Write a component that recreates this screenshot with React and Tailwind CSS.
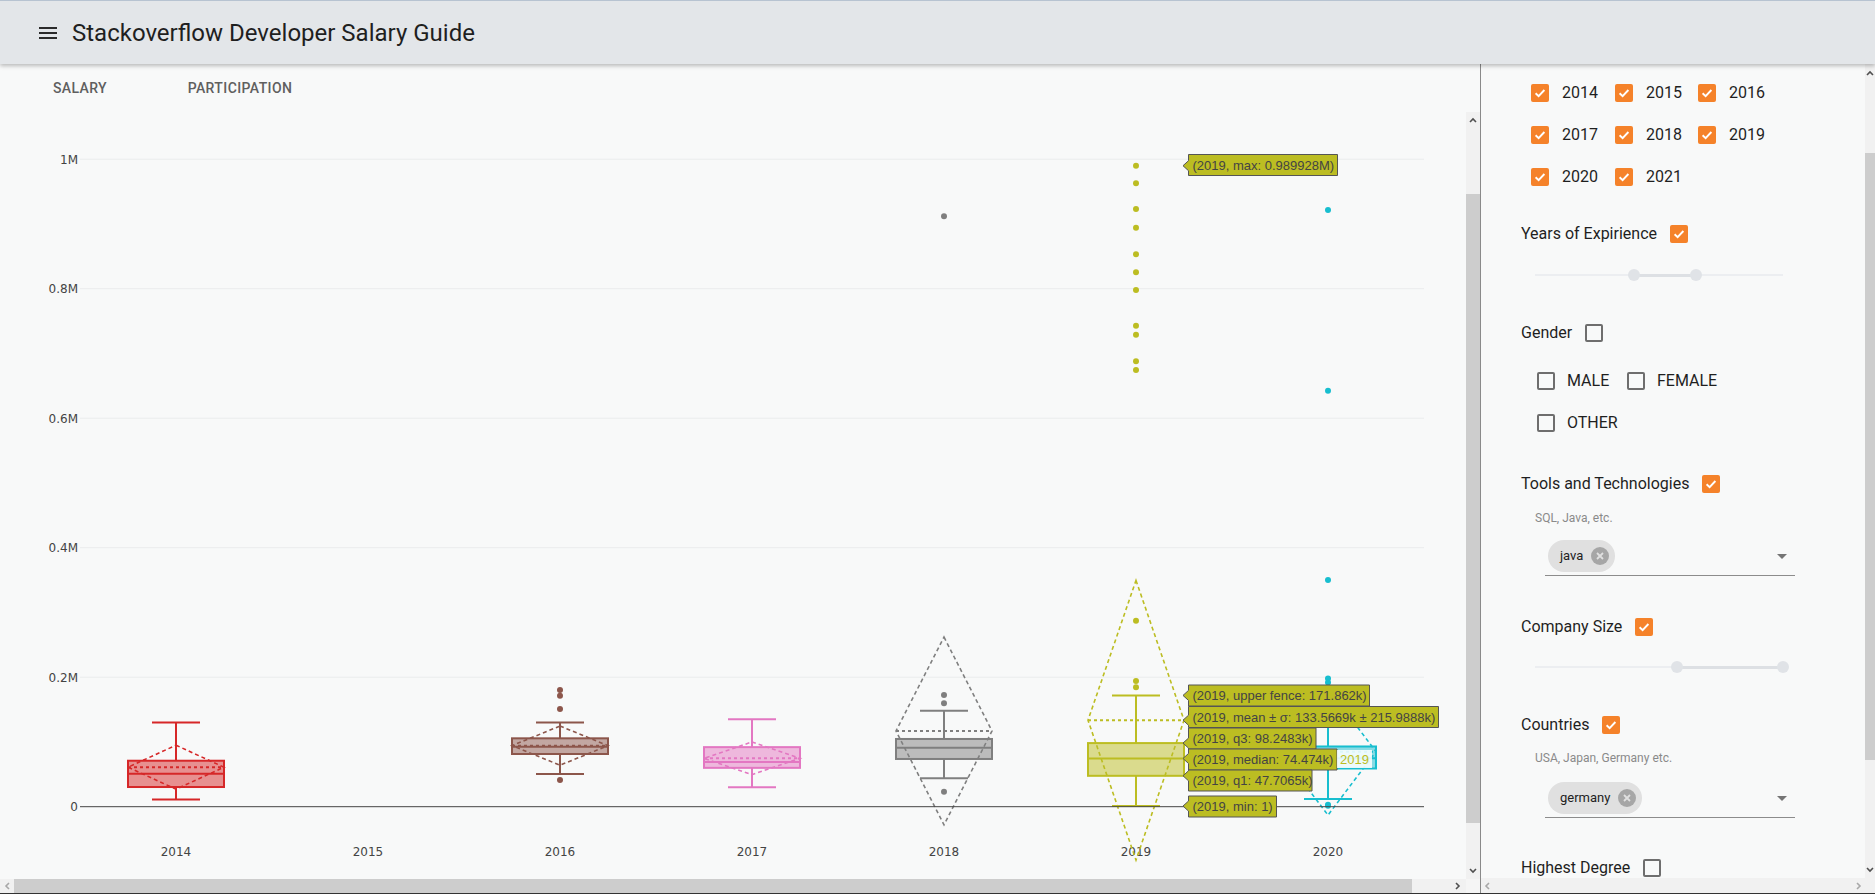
import React from 'react';

const Y = (v) => 806.7 - v * 0.6475;

const boxes = [
  { x: 176, c: '#d62728', lf: 11, q1: 30.4, med: 51, q3: 71, uf: 130, mean: 61, sd: 34, out: [] },
  { x: 560, c: '#8c564b', lf: 50.5, q1: 81.4, med: 92.7, q3: 105.6, uf: 130, mean: 94.3, sd: 30.3, out: [180.2, 171.4, 150.9, 41.2] },
  { x: 752, c: '#e377c2', lf: 30, q1: 60, med: 69, q3: 92, uf: 135, mean: 74.75, sd: 25.25, out: [] },
  { x: 944, c: '#7f7f7f', lf: 44, q1: 73.7, med: 91, q3: 104.6, uf: 148, mean: 117, sd: 145, out: [911.7, 172.5, 159.7, 23.2] },
  {
    x: 1136, c: '#bcbd22', lf: 1, q1: 47.7065, med: 74.474, q3: 98.2483, uf: 171.862, mean: 133.5669, sd: 215.9888,
    out: [989.9, 962.8, 923.1, 894.3, 853.2, 825.5, 798, 742.9, 729, 687.9, 674.4, 287.2, 194.1, 184.4],
  },
  { x: 1328, c: '#17becf', lf: 12, q1: 59, med: 75, q3: 93, uf: 180, mean: 85, sd: 98, out: [921.5, 642.5, 350, 198, 192, 3, 1.5] },
];

const tips = [
  { ay: Y(989.928), top: 154.5, w: 149, t: '(2019, max: 0.989928M)' },
  { ay: Y(171.862), top: 685, w: 181, t: '(2019, upper fence: 171.862k)' },
  { ay: Y(133.5669), top: 706.5, w: 250, t: '(2019, mean ± σ: 133.5669k ± 215.9888k)' },
  { ay: Y(98.2483), top: 728, w: 127.5, t: '(2019, q3: 98.2483k)' },
  { ay: Y(74.474), top: 749, w: 148.5, t: '(2019, median: 74.474k)' },
  { ay: Y(47.7065), top: 770, w: 123.5, t: '(2019, q1: 47.7065k)' },
  { ay: Y(1), top: 796, w: 88, t: '(2019, min: 1)' },
];

const years = ['2014', '2015', '2016', '2017', '2018', '2019', '2020'];

function BoxTrace({ b }) {
  const l = b.x - 48;
  const r = b.x + 48;
  return (
    <g>
      <polygon
        points={`${b.x},${Y(b.mean + b.sd)} ${r},${Y(b.mean)} ${b.x},${Y(b.mean - b.sd)} ${l},${Y(b.mean)}`}
        fill="none"
        stroke={b.c}
        strokeWidth="1.6"
        strokeDasharray="4,3"
      />
      <line x1={b.x} x2={b.x} y1={Y(b.q3)} y2={Y(b.uf)} stroke={b.c} strokeWidth="2" />
      <line x1={b.x} x2={b.x} y1={Y(b.q1)} y2={Y(b.lf)} stroke={b.c} strokeWidth="2" />
      <line x1={b.x - 24} x2={b.x + 24} y1={Y(b.uf)} y2={Y(b.uf)} stroke={b.c} strokeWidth="2" />
      <line x1={b.x - 24} x2={b.x + 24} y1={Y(b.lf)} y2={Y(b.lf)} stroke={b.c} strokeWidth="2" />
      <rect
        x={l}
        y={Y(b.q3)}
        width={96}
        height={Y(b.q1) - Y(b.q3)}
        fill={b.c}
        fillOpacity="0.5"
        stroke={b.c}
        strokeWidth="2"
      />
      <line x1={l} x2={r} y1={Y(b.med)} y2={Y(b.med)} stroke={b.c} strokeWidth="2" />
      <line x1={l} x2={r} y1={Y(b.mean)} y2={Y(b.mean)} stroke={b.c} strokeWidth="2" strokeDasharray="3,3" />
      {b.out.map((v, i) => (
        <circle key={i} cx={b.x} cy={Y(v)} r="3" fill={b.c} />
      ))}
    </g>
  );
}

function HoverLabel({ tip }) {
  const rx = 1188.5;
  const h = 21;
  const a1 = Math.max(tip.top, tip.ay - 5);
  const a2 = Math.min(tip.top + h, tip.ay + 5);
  return (
    <g>
      <path
        d={`M1183,${tip.ay} L${rx},${a1} V${tip.top} H${rx + tip.w} V${tip.top + h} H${rx} V${a2} Z`}
        fill="#bcbd22"
        stroke="#555"
        strokeWidth="1"
      />
      <text x={rx + 4} y={tip.top + h / 2 + 4.5} fontSize="13" fill="#444" fontFamily="'Liberation Sans', Arial, sans-serif">
        {tip.t}
      </text>
    </g>
  );
}

function SalaryChart() {
  const grid = [200, 400, 600, 800, 1000];
  const labels = { 200: '0.2M', 400: '0.4M', 600: '0.6M', 800: '0.8M', 1000: '1M' };
  return (
    <svg width="1466" height="767" viewBox="0 112 1466 767" className="block">
      {grid.map((v) => (
        <line key={v} x1="80" x2="1424" y1={Y(v)} y2={Y(v)} stroke="#eaeced" strokeWidth="1" />
      ))}
      <g fontFamily="'DejaVu Sans', Verdana, sans-serif" fontSize="12" fill="#444">
        {grid.map((v) => (
          <text key={v} x="78" y={Y(v)} dy="0.36em" textAnchor="end">
            {labels[v]}
          </text>
        ))}
        <text x="78" y={Y(0)} dy="0.36em" textAnchor="end">0</text>
        {years.map((yr, i) => (
          <text key={yr} x={176 + i * 192} y="856" textAnchor="middle">
            {yr}
          </text>
        ))}
      </g>
      {boxes.map((b) => (
        <BoxTrace key={b.x} b={b} />
      ))}
      <line x1="80" x2="1424" y1={Y(0)} y2={Y(0)} stroke="#444" strokeWidth="1" />
      {tips.map((t) => (
        <HoverLabel key={t.t} tip={t} />
      ))}
      <rect x="1337" y="750" width="35" height="18" fill="#ffffff" fillOpacity="0.85" />
      <text x="1354.5" y="763.5" textAnchor="middle" fontSize="13" fill="#bcbd22" fontFamily="'Liberation Sans', Arial, sans-serif">
        2019
      </text>
    </svg>
  );
}

function Chevron({ dir, light }) {
  const paths = {
    up: 'M1 5 L4 2 L7 5',
    down: 'M1 2 L4 5 L7 2',
    left: 'M5 1 L2 4 L5 7',
    right: 'M2 1 L5 4 L2 7',
  };
  const vert = dir === 'up' || dir === 'down';
  return (
    <svg width={vert ? 8 : 7} height={vert ? 7 : 8} viewBox={vert ? '0 0 8 7' : '0 0 7 8'}>
      <path d={paths[dir]} fill="none" stroke={light ? '#a8a8a8' : '#505050'} strokeWidth="1.6" />
    </svg>
  );
}

function Check({ on }) {
  if (!on) {
    return <span className="w-[18px] h-[18px] shrink-0 rounded-[2px] border-2 border-[#6e6e6e]" />;
  }
  return (
    <span className="w-[18px] h-[18px] shrink-0 rounded-[2px] bg-[#f5822a] flex items-center justify-center">
      <svg width="14" height="14" viewBox="0 0 14 14">
        <path d="M2.6 7.2 L5.6 10.1 L11.4 4" fill="none" stroke="#fff" strokeWidth="1.9" />
      </svg>
    </span>
  );
}

function SectionLabel({ text, on }) {
  return (
    <div className="ml-[40px] h-[24px] flex items-center gap-[13px] text-[16px] text-[#1f1f1f]">
      <span>{text}</span>
      <Check on={on} />
    </div>
  );
}

function RangeSlider({ a, b, mt }) {
  return (
    <div className={`ml-[54px] w-[248px] h-[12px] relative ${mt}`}>
      <div className="absolute left-0 right-0 top-[5px] h-[2px] bg-[#eceef1]" />
      <div className="absolute top-[4.5px] h-[3px] bg-[#dde0e4]" style={{ left: a, width: b - a }} />
      <div className="absolute top-0 w-[12px] h-[12px] rounded-full bg-[#e0e3e7]" style={{ left: a - 6 }} />
      <div className="absolute top-0 w-[12px] h-[12px] rounded-full bg-[#e0e3e7]" style={{ left: b - 6 }} />
    </div>
  );
}

function ChipSelect({ value, mt }) {
  return (
    <div className={`ml-[64px] w-[250px] flex items-center justify-between border-b border-[#8c8c8c] pb-[3px] ${mt}`}>
      <div className="ml-[3px] h-[32px] rounded-full bg-[#e0e0e0] pl-[12px] pr-[6px] flex items-center gap-[8px]">
        <span className="text-[13px] text-[#222]">{value}</span>
        <span className="w-[18px] h-[18px] rounded-full bg-[#a6a6a6] flex items-center justify-center">
          <svg width="8" height="8" viewBox="0 0 8 8">
            <path d="M1 1 L7 7 M7 1 L1 7" stroke="#e0e0e0" strokeWidth="1.8" />
          </svg>
        </span>
      </div>
      <svg width="10" height="5" viewBox="0 0 10 5" className="mr-[8px]">
        <path d="M0 0 L10 0 L5 5 Z" fill="#757575" />
      </svg>
    </div>
  );
}

export default function App() {
  const yearOpts = ['2014', '2015', '2016', '2017', '2018', '2019', '2020', '2021'];
  return (
    <div className="w-[1875px] h-[894px] flex flex-col overflow-hidden bg-[#f8f9f9] border-b border-[#333] font-['Roboto','Liberation_Sans',sans-serif]">
      <header className="h-[64px] shrink-0 bg-[#e3e6e9] border-t border-[#b7c3d1] shadow-[0_2px_4px_rgba(0,0,0,0.25)] relative z-10 flex items-center pl-[39px]">
        <svg width="18" height="12" viewBox="0 0 18 12">
          <rect x="0" y="0" width="18" height="2" fill="#2b2b2b" />
          <rect x="0" y="5" width="18" height="2" fill="#2b2b2b" />
          <rect x="0" y="10" width="18" height="2" fill="#2b2b2b" />
        </svg>
        <h1 className="ml-[15px] text-[24px] text-[#1f1f1f] font-normal">Stackoverflow Developer Salary Guide</h1>
      </header>

      <div className="flex flex-1 min-h-0">
        <main className="w-[1481px] shrink-0 flex flex-col border-r border-[#8a8a8a]">
          <div className="h-[48px] shrink-0 flex">
            <div className="w-[160px] flex items-center justify-center text-[14px] font-medium tracking-[0.4px] text-[#5f5f5f]">SALARY</div>
            <div className="w-[160px] flex items-center justify-center text-[14px] font-medium tracking-[0.4px] text-[#5f5f5f]">PARTICIPATION</div>
          </div>
          <div className="flex flex-1 min-h-0">
            <div className="w-[1466px] overflow-hidden">
              <SalaryChart />
            </div>
            <div className="w-[14px] bg-[#f1f1f1] flex flex-col">
              <div className="h-[17px] flex items-center justify-center">
                <Chevron dir="up" />
              </div>
              <div className="mt-[65px] h-[629px] bg-[#cdcdcd]" />
              <div className="flex-1" />
              <div className="h-[17px] flex items-center justify-center">
                <Chevron dir="down" />
              </div>
            </div>
          </div>
          <div className="h-[14px] shrink-0 flex">
            <div className="w-[1466px] bg-[#f1f1f1] flex">
              <div className="w-[14px] flex items-center justify-center">
                <Chevron dir="left" light />
              </div>
              <div className="w-[1398px] bg-[#cdcdcd]" />
              <div className="flex-1" />
              <div className="w-[17px] flex items-center justify-center">
                <Chevron dir="right" />
              </div>
            </div>
            <div className="flex-1 bg-[#f5f5f5]" />
          </div>
        </main>

        <aside className="flex-1 flex">
          <div className="w-[384px] flex flex-col">
            <div className="flex-1 min-h-0 overflow-hidden">
              <div className="pt-[8px] ml-[50px] grid grid-cols-[84px_83px_83px]">
                {yearOpts.map((y) => (
                  <div key={y} className="h-[42px] flex items-center gap-[13px] text-[16px] text-[#1f1f1f]">
                    <Check on />
                    <span>{y}</span>
                  </div>
                ))}
              </div>

              <div className="mt-[24px]">
                <SectionLabel text="Years of Expirience" on />
              </div>
              <RangeSlider a={99} b={161} mt="mt-[23px]" />

              <div className="mt-[40px]">
                <SectionLabel text="Gender" on={false} />
              </div>
              <div className="mt-[15px] ml-[56px] flex flex-wrap w-[200px]">
                <div className="w-[90px] h-[42px] flex items-center gap-[12px] text-[16px] text-[#1f1f1f]">
                  <Check on={false} />
                  <span>MALE</span>
                </div>
                <div className="h-[42px] flex items-center gap-[12px] text-[16px] text-[#1f1f1f]">
                  <Check on={false} />
                  <span>FEMALE</span>
                </div>
                <div className="w-[110px] h-[42px] flex items-center gap-[12px] text-[16px] text-[#1f1f1f]">
                  <Check on={false} />
                  <span>OTHER</span>
                </div>
              </div>

              <div className="mt-[28px]">
                <SectionLabel text="Tools and Technologies" on />
              </div>
              <div className="mt-[14px] ml-[54px] h-[16px] leading-[16px] text-[12px] text-[#8a8a8a]">SQL, Java, etc.</div>
              <ChipSelect value="java" mt="mt-[14px]" />

              <div className="mt-[39px]">
                <SectionLabel text="Company Size" on />
              </div>
              <RangeSlider a={141.7} b={247.7} mt="mt-[22px]" />

              <div className="mt-[40px]">
                <SectionLabel text="Countries" on />
              </div>
              <div className="mt-[13px] ml-[54px] h-[16px] leading-[16px] text-[12px] text-[#8a8a8a]">USA, Japan, Germany etc.</div>
              <ChipSelect value="germany" mt="mt-[16px]" />

              <div className="mt-[38px]">
                <SectionLabel text="Highest Degree" on={false} />
              </div>
            </div>
            <div className="h-[15px] shrink-0 bg-[#f1f1f1] flex items-center justify-between px-[3px]">
              <Chevron dir="left" light />
              <Chevron dir="right" light />
            </div>
          </div>
          <div className="flex-1 bg-[#f1f1f1] flex flex-col">
            <div className="h-[18px] flex items-center justify-center">
              <Chevron dir="up" />
            </div>
            <div className="mt-[71px] h-[607px] bg-[#cdcdcd]" />
            <div className="flex-1" />
            <div className="h-[17px] flex items-center justify-center">
              <Chevron dir="down" />
            </div>
            <div className="h-[15px]" />
          </div>
        </aside>
      </div>
    </div>
  );
}
